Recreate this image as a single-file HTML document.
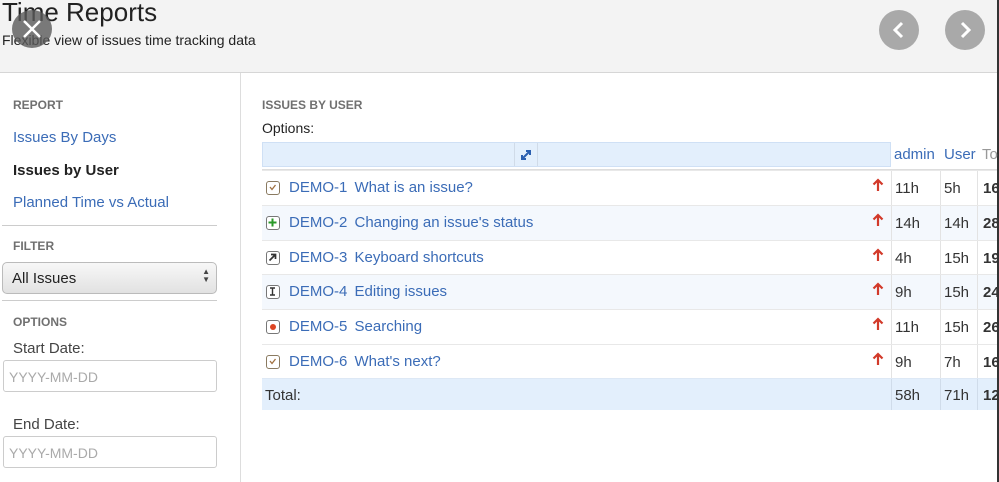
<!DOCTYPE html>
<html><head><style>
*{margin:0;padding:0;box-sizing:border-box}
body{width:999px;height:482px;overflow:hidden;background:#fff;font-family:"Liberation Sans",Arial,sans-serif;position:relative;color:#333}
.a{position:absolute;white-space:nowrap}
.hdr{left:0;top:0;width:999px;height:73px;background:#f3f3f3;border-bottom:1px solid #d6d6d6}
.lnk{color:#3b6cb7;font-size:15px}
.sec{color:#707070;font-size:12px;font-weight:bold}
.circ{width:40px;height:40px;border-radius:50%;background:#a9a9a9}
.inp{left:3px;width:214px;height:32px;border:1px solid #ccc;border-radius:3px;color:#aaa;font-size:14px;padding:8px 5px}
.row{left:262px;width:735px;height:35px;border-top:1px solid #e8e8e8}
.row .t{position:absolute;left:27px;top:8px;font-size:15px;color:#3b6cb7}
.row .t b{font-weight:normal;margin-right:3px}
.row .i{position:absolute;left:4px;top:10px;width:14px;height:14px;border:1.5px solid #777;border-radius:3px;background:#fff}
.row .ar{position:absolute;left:610px;top:7px}
.row .c{position:absolute;top:9px;font-size:15px;color:#333}
.vl{position:absolute;top:0;width:1px;height:100%;background:#e3e3e3}
</style></head><body>
<div class="a hdr"></div>
<div class="a" style="left:2px;top:-3px;font-size:26px;color:#222">Time Reports</div>
<div class="a" style="left:2px;top:32px;font-size:14px;color:#222">Flexible view of issues time tracking data</div>
<div class="a circ" style="left:12px;top:10px;width:40px;height:38px;background:rgba(90,90,90,.8)"></div>
<svg class="a" style="left:12px;top:10px" width="40" height="38"><path d="M12 11 L28 27 M28 11 L12 27" stroke="#fff" stroke-width="2.5"/></svg>
<div class="a circ" style="left:879px;top:10px"></div>
<div class="a circ" style="left:945px;top:10px"></div>
<svg class="a" style="left:879px;top:10px" width="40" height="40"><path d="M23 13 L16 20 L23 27" stroke="#fff" stroke-width="3" fill="none"/></svg>
<svg class="a" style="left:945px;top:10px" width="40" height="40"><path d="M17 13 L24 20 L17 27" stroke="#fff" stroke-width="3" fill="none"/></svg>
<div class="a" style="left:240px;top:73px;width:1px;height:409px;background:#ddd"></div>
<div class="a" style="left:997px;top:0;width:2px;height:482px;background:#333"></div>

<div class="a sec" style="left:13px;top:98px">REPORT</div>
<div class="a lnk" style="left:13px;top:129px">Issues By Days</div>
<div class="a" style="left:13px;top:162px;font-size:15px;font-weight:bold;color:#222">Issues by User</div>
<div class="a lnk" style="left:13px;top:194px">Planned Time vs Actual</div>
<div class="a" style="left:2px;top:225px;width:215px;height:1px;background:#ccc"></div>
<div class="a sec" style="left:13px;top:239px">FILTER</div>
<div class="a" style="left:2px;top:262px;width:215px;height:32px;border:1px solid #bbb;border-radius:5px;background:linear-gradient(#f7f7f7,#e2e2e2);font-size:15px;color:#222;padding:7px 9px">All Issues<span style="position:absolute;right:6px;top:5px;font-size:8px;line-height:8px;color:#444">▲<br>▼</span></div>
<div class="a" style="left:2px;top:300px;width:215px;height:1px;background:#ccc"></div>
<div class="a sec" style="left:13px;top:315px">OPTIONS</div>
<div class="a" style="left:13px;top:340px;font-size:15px;color:#444">Start Date:</div>
<div class="a inp" style="top:360px">YYYY-MM-DD</div>
<div class="a" style="left:13px;top:416px;font-size:15px;color:#444">End Date:</div>
<div class="a inp" style="top:436px">YYYY-MM-DD</div>

<div class="a sec" style="left:262px;top:98px">ISSUES BY USER</div>
<div class="a" style="left:262px;top:120px;font-size:14px;color:#222">Options:</div>
<div class="a" style="left:262px;top:142px;width:629px;height:25px;background:#e3effc;border:1px solid #cfe0f5"></div>
<div class="a" style="left:514px;top:143px;width:24px;height:23px;border-left:1px solid #d0dbe8;border-right:1px solid #d0dbe8"></div>
<svg class="a" style="left:518px;top:147px" width="16" height="16"><path d="M4 12 L12 4 M8 4 H12 V8 M4 8 V12 H8" stroke="#2a5fb0" stroke-width="2" fill="none"/></svg>
<div class="a lnk" style="left:894px;top:146px">admin</div>
<div class="a lnk" style="left:944px;top:146px">User</div>
<div class="a" style="left:982px;top:146px;font-size:15px;color:#999">To</div>
<div class="a" style="left:262px;top:169px;width:735px;height:2px;background:#ddd"></div>

<svg width="0" height="0" style="position:absolute"><defs><symbol id="up" viewBox="0 0 12 14"><path d="M6 13 V2 M1.5 6.5 L6 2 L10.5 6.5" stroke="#d23a2a" stroke-width="2.2" fill="none"/></symbol></defs></svg>

<div class="a row" style="top:170px"><div class="vl" style="left:629px"></div><div class="vl" style="left:678px"></div><div class="vl" style="left:715px"></div><div class="i" style="border-color:#8a7a60"><svg width="11" height="11" style="position:absolute;left:0;top:0"><path d="M3 5 L5 7.5 L8.5 3" stroke="#a07040" stroke-width="1.3" fill="none"/></svg></div><div class="t"><b>DEMO-1</b> What is an issue?</div><svg class="ar" width="12" height="14"><use href="#up"/></svg><div class="c" style="left:633px">11h</div><div class="c" style="left:682px">5h</div><div class="c" style="left:721px;font-weight:bold">16</div></div>
<div class="a row" style="top:205px;background:#f4f8fd"><div class="vl" style="left:629px"></div><div class="vl" style="left:678px"></div><div class="vl" style="left:715px"></div><div class="i"><svg width="11" height="11" style="position:absolute;left:0;top:0"><path d="M5.5 1.5 V9.5 M1.5 5.5 H9.5" stroke="#2a9a2a" stroke-width="2" fill="none"/></svg></div><div class="t"><b>DEMO-2</b> Changing an issue's status</div><svg class="ar" width="12" height="14"><use href="#up"/></svg><div class="c" style="left:633px">14h</div><div class="c" style="left:682px">14h</div><div class="c" style="left:721px;font-weight:bold">28</div></div>
<div class="a row" style="top:240px"><div class="vl" style="left:629px"></div><div class="vl" style="left:678px"></div><div class="vl" style="left:715px"></div><div class="i"><svg width="11" height="11" style="position:absolute;left:0;top:0"><path d="M2.5 8.5 L8 3 M4 2.5 H8.5 V7" stroke="#333" stroke-width="1.7" fill="none"/></svg></div><div class="t"><b>DEMO-3</b> Keyboard shortcuts</div><svg class="ar" width="12" height="14"><use href="#up"/></svg><div class="c" style="left:633px">4h</div><div class="c" style="left:682px">15h</div><div class="c" style="left:721px;font-weight:bold">19</div></div>
<div class="a row" style="top:274px;background:#f4f8fd"><div class="vl" style="left:629px"></div><div class="vl" style="left:678px"></div><div class="vl" style="left:715px"></div><div class="i"><svg width="11" height="11" style="position:absolute;left:0;top:0"><path d="M3 2 H8 M3 9 H8 M5.5 2 V9" stroke="#333" stroke-width="1.4" fill="none"/></svg></div><div class="t"><b>DEMO-4</b> Editing issues</div><svg class="ar" width="12" height="14"><use href="#up"/></svg><div class="c" style="left:633px">9h</div><div class="c" style="left:682px">15h</div><div class="c" style="left:721px;font-weight:bold">24</div></div>
<div class="a row" style="top:309px"><div class="vl" style="left:629px"></div><div class="vl" style="left:678px"></div><div class="vl" style="left:715px"></div><div class="i"><span style="position:absolute;left:2.5px;top:2.5px;width:6px;height:6px;border-radius:50%;background:#d42"></span></div><div class="t"><b>DEMO-5</b> Searching</div><svg class="ar" width="12" height="14"><use href="#up"/></svg><div class="c" style="left:633px">11h</div><div class="c" style="left:682px">15h</div><div class="c" style="left:721px;font-weight:bold">26</div></div>
<div class="a row" style="top:344px"><div class="vl" style="left:629px"></div><div class="vl" style="left:678px"></div><div class="vl" style="left:715px"></div><div class="i" style="border-color:#8a7a60"><svg width="11" height="11" style="position:absolute;left:0;top:0"><path d="M3 5 L5 7.5 L8.5 3" stroke="#a07040" stroke-width="1.3" fill="none"/></svg></div><div class="t"><b>DEMO-6</b> What's next?</div><svg class="ar" width="12" height="14"><use href="#up"/></svg><div class="c" style="left:633px">9h</div><div class="c" style="left:682px">7h</div><div class="c" style="left:721px;font-weight:bold">16</div></div>
<div class="a row" style="top:378px;height:32px;background:#e3effc;border-top:1px solid #dde8f5"><div class="vl" style="left:629px;background:#d0dcea"></div><div class="vl" style="left:678px;background:#d0dcea"></div><div class="vl" style="left:715px;background:#d0dcea"></div><div class="c" style="left:3px;top:8px">Total:</div><div class="c" style="left:633px;top:8px">58h</div><div class="c" style="left:682px;top:8px">71h</div><div class="c" style="left:721px;top:8px;font-weight:bold">12</div></div>
</body></html>
